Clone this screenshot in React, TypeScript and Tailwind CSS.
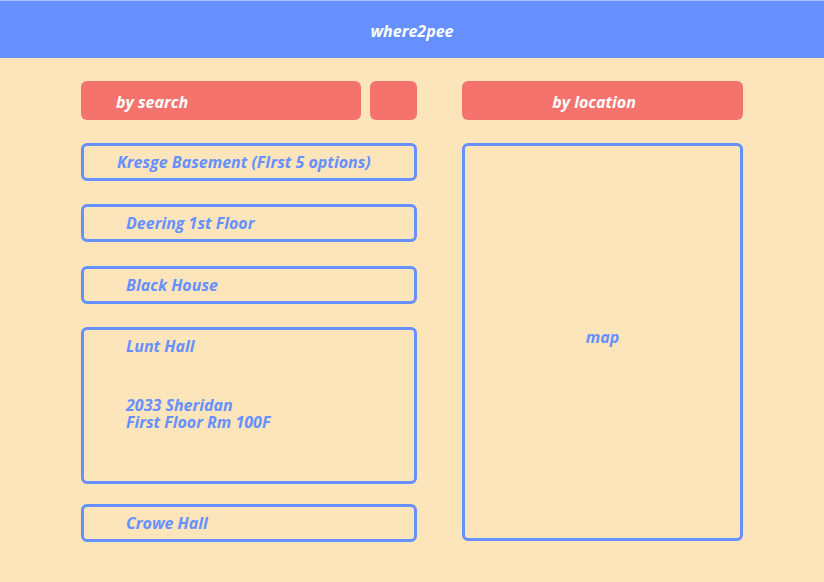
import React from "react";

const places = [
  { name: "Kresge Basement (FIrst 5 options)", indent: "pl-[33px]", gap: "mt-[23px]" },
  { name: "Deering 1st Floor", indent: "pl-[42px]", gap: "mt-[23px]" },
  { name: "Black House", indent: "pl-[42px]", gap: "mt-[24px]" },
];

const Row: React.FC<{ indent: string; className?: string; children: React.ReactNode }> = ({
  indent,
  className = "",
  children,
}) => (
  <div className={`flex h-[38px] items-center rounded-md border-[3px] border-[#6690ff] ${indent} ${className}`}>
    <span className="text-[16px] font-bold italic text-[#6690ff]">{children}</span>
  </div>
);

export default function App() {
  return (
    <div
      className="flex h-[582px] w-[824px] flex-col bg-[#fce4bb]"
      style={{ fontFamily: '"Open Sans", "Noto Sans", sans-serif' }}
    >
      {/* Header */}
      <div className="flex h-[58px] items-center justify-center border-t border-[#a8bdff] bg-[#668fff] pt-[3px]">
        <h1 className="text-[16px] font-bold italic text-white">where2pee</h1>
      </div>

      <div className="flex gap-[45px] px-[81px] pt-[23px]">
        {/* Left column */}
        <div className="flex w-[336px] flex-col">
          <div className="flex h-[39px] gap-[9px]">
            <button className="flex flex-1 items-center rounded-md bg-[#f5736d] pl-[35px] pt-[2px] text-[16px] font-bold italic text-white">
              by search
            </button>
            <button className="w-[47px] rounded-md bg-[#f5736d]" />
          </div>

          {places.map((p) => (
            <Row key={p.name} indent={p.indent} className={p.gap}>
              {p.name}
            </Row>
          ))}

          <div className="mt-[23px] flex h-[157px] flex-col rounded-md border-[3px] border-[#6690ff] pl-[42px] pt-[4px] text-[16px] font-bold italic leading-[17px] text-[#6690ff]">
            <span className="leading-[24px]">Lunt Hall</span>
            <span className="mt-[39px]">2033 Sheridan</span>
            <span>First Floor Rm 100F</span>
          </div>

          <Row indent="pl-[42px]" className="mt-[20px]">
            Crowe Hall
          </Row>
        </div>

        {/* Right column */}
        <div className="flex w-[281px] flex-col gap-[23px]">
          <button className="h-[39px] rounded-md bg-[#f5736d] pr-[17px] pt-[2px] text-[16px] font-bold italic text-white">
            by location
          </button>
          <div className="flex h-[398px] items-center justify-center rounded-md border-[3px] border-[#6690ff] pb-[10px]">
            <span className="text-[16px] font-bold italic text-[#6690ff]">map</span>
          </div>
        </div>
      </div>
    </div>
  );
}
